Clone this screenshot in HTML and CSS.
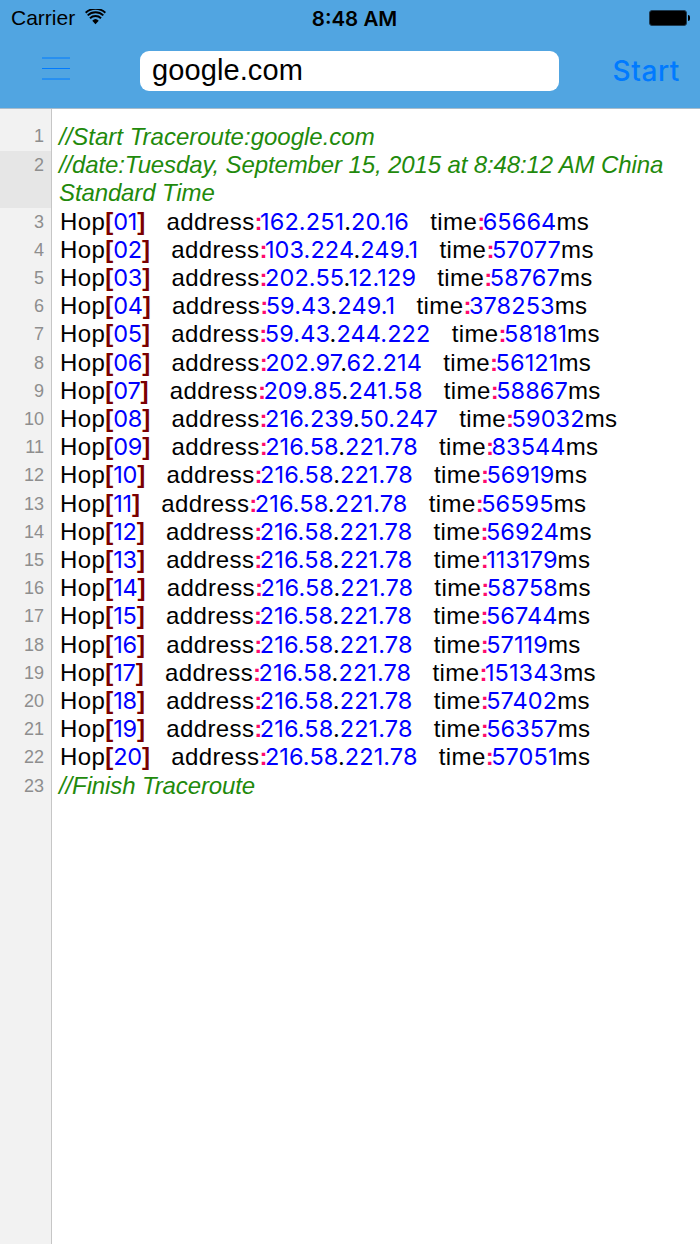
FILE: index.html
```html
<!DOCTYPE html>
<html lang="en">
<head>
<meta charset="utf-8">
<title>Traceroute</title>
<link rel="stylesheet" href="styles.css">
</head>
<body>
<header class="top">
  <div class="status">
    <div class="status-left"><span>Carrier</span>
      <svg class="wifi" width="21" height="16" viewBox="0 0 22 16"><path d="M11 15.500 7.600 11.800a5 5 0 0 1 6.800 0Z" fill="#000"/><path d="M5.200 9.300a8.500 8.500 0 0 1 11.600 0M2.800 6.300a12 12 0 0 1 16.400 0M.7 3.500a15.200 15.200 0 0 1 20.600 0" fill="none" stroke="#000" stroke-width="2"/></svg>
    </div>
    <div class="clock">8:48 AM</div>
    <div class="battery"><span class="battery-body"></span><span class="battery-tip"></span></div>
  </div>
  <div class="nav">
    <svg class="menu" width="28" height="24" viewBox="0 0 28 24"><path d="M0 1h28M0 11.500h28M0 22h28" stroke="#007aff" stroke-width="1"/></svg>
    <div class="field">google.com</div>
    <div class="start">Start</div>
  </div>
</header>
<main class="editor">
  <div class="row first"><div class="num">1</div><div class="code cm">//Start Traceroute:google.com</div></div>
  <div class="row active"><div class="num">2</div><div class="code cm">//date:Tuesday, September 15, 2015 at 8:48:12 AM China Standard Time</div></div>
  <div class="row"><div class="num">3</div><div class="code">Hop<b>[</b><i class="h">01</i><b>]</b>   address<u>:</u><i>162.251<s>.</s>20.16</i>   time<u>:</u><i>65664</i>ms</div></div>
  <div class="row"><div class="num">4</div><div class="code">Hop<b>[</b><i class="h">02</i><b>]</b>   address<u>:</u><i>103.224<s>.</s>249.1</i>   time<u>:</u><i>57077</i>ms</div></div>
  <div class="row"><div class="num">5</div><div class="code">Hop<b>[</b><i class="h">03</i><b>]</b>   address<u>:</u><i>202.55<s>.</s>12.129</i>   time<u>:</u><i>58767</i>ms</div></div>
  <div class="row"><div class="num">6</div><div class="code">Hop<b>[</b><i class="h">04</i><b>]</b>   address<u>:</u><i>59.43<s>.</s>249.1</i>   time<u>:</u><i>378253</i>ms</div></div>
  <div class="row"><div class="num">7</div><div class="code">Hop<b>[</b><i class="h">05</i><b>]</b>   address<u>:</u><i>59.43<s>.</s>244.222</i>   time<u>:</u><i>58181</i>ms</div></div>
  <div class="row"><div class="num">8</div><div class="code">Hop<b>[</b><i class="h">06</i><b>]</b>   address<u>:</u><i>202.97<s>.</s>62.214</i>   time<u>:</u><i>56121</i>ms</div></div>
  <div class="row"><div class="num">9</div><div class="code">Hop<b>[</b><i class="h">07</i><b>]</b>   address<u>:</u><i>209.85<s>.</s>241.58</i>   time<u>:</u><i>58867</i>ms</div></div>
  <div class="row"><div class="num">10</div><div class="code">Hop<b>[</b><i class="h">08</i><b>]</b>   address<u>:</u><i>216.239<s>.</s>50.247</i>   time<u>:</u><i>59032</i>ms</div></div>
  <div class="row"><div class="num">11</div><div class="code">Hop<b>[</b><i class="h">09</i><b>]</b>   address<u>:</u><i>216.58<s>.</s>221.78</i>   time<u>:</u><i>83544</i>ms</div></div>
  <div class="row"><div class="num">12</div><div class="code">Hop<b>[</b><i class="h">10</i><b>]</b>   address<u>:</u><i>216.58<s>.</s>221.78</i>   time<u>:</u><i>56919</i>ms</div></div>
  <div class="row"><div class="num">13</div><div class="code">Hop<b>[</b><i class="h">11</i><b>]</b>   address<u>:</u><i>216.58<s>.</s>221.78</i>   time<u>:</u><i>56595</i>ms</div></div>
  <div class="row"><div class="num">14</div><div class="code">Hop<b>[</b><i class="h">12</i><b>]</b>   address<u>:</u><i>216.58<s>.</s>221.78</i>   time<u>:</u><i>56924</i>ms</div></div>
  <div class="row"><div class="num">15</div><div class="code">Hop<b>[</b><i class="h">13</i><b>]</b>   address<u>:</u><i>216.58<s>.</s>221.78</i>   time<u>:</u><i>113179</i>ms</div></div>
  <div class="row"><div class="num">16</div><div class="code">Hop<b>[</b><i class="h">14</i><b>]</b>   address<u>:</u><i>216.58<s>.</s>221.78</i>   time<u>:</u><i>58758</i>ms</div></div>
  <div class="row"><div class="num">17</div><div class="code">Hop<b>[</b><i class="h">15</i><b>]</b>   address<u>:</u><i>216.58<s>.</s>221.78</i>   time<u>:</u><i>56744</i>ms</div></div>
  <div class="row"><div class="num">18</div><div class="code">Hop<b>[</b><i class="h">16</i><b>]</b>   address<u>:</u><i>216.58<s>.</s>221.78</i>   time<u>:</u><i>57119</i>ms</div></div>
  <div class="row"><div class="num">19</div><div class="code">Hop<b>[</b><i class="h">17</i><b>]</b>   address<u>:</u><i>216.58<s>.</s>221.78</i>   time<u>:</u><i>151343</i>ms</div></div>
  <div class="row"><div class="num">20</div><div class="code">Hop<b>[</b><i class="h">18</i><b>]</b>   address<u>:</u><i>216.58<s>.</s>221.78</i>   time<u>:</u><i>57402</i>ms</div></div>
  <div class="row"><div class="num">21</div><div class="code">Hop<b>[</b><i class="h">19</i><b>]</b>   address<u>:</u><i>216.58<s>.</s>221.78</i>   time<u>:</u><i>56357</i>ms</div></div>
  <div class="row"><div class="num">22</div><div class="code">Hop<b>[</b><i class="h">20</i><b>]</b>   address<u>:</u><i>216.58<s>.</s>221.78</i>   time<u>:</u><i>57051</i>ms</div></div>
  <div class="row"><div class="num">23</div><div class="code cm">//Finish Traceroute</div></div>
  <div class="fill"></div>
</main>
</body>
</html>
```
FILE: styles.css
```css
* { box-sizing: border-box; }
html, body { margin: 0; height: 100%; }
body {
  width: 700px;
  height: 1244px;
  overflow: hidden;
  display: flex;
  flex-direction: column;
  font-family: "Liberation Sans", Arial, sans-serif;
  background: #fff;
}
.top {
  height: 109px;
  background: #51a5e1;
  border-bottom: 1px solid #a9bccb;
  flex: none;
}
.status {
  height: 36px;
  padding: 0 10px 0 11px;
  display: grid;
  grid-template-columns: 1fr auto 1fr;
  align-items: center;
  font-size: 21px;
  color: #000;
}
.status-left { display: flex; align-items: center; gap: 10px; }
.wifi { margin-top: -3px; }
.clock {
  font-family: Inter, "Liberation Sans", sans-serif;
  font-weight: 600;
  font-size: 20.500px;
  margin-left: 8px;
}
.battery { justify-self: end; display: flex; align-items: center; }
.battery-body {
  width: 38px;
  height: 16px;
  background: #000;
  border-radius: 3px;
  border: 1px solid #1d3a50;
}
.battery-tip { width: 2px; height: 6px; background: #000; border-radius: 0 2px 2px 0; margin-left: 1px; }
.nav {
  height: 72px;
  display: flex;
  align-items: center;
  padding: 0 20px 0 42px;
}
.menu { flex: none; margin-bottom: 6px; }
.field {
  width: 419px;
  height: 40px;
  margin: 0 0 2px 70px;
  padding-left: 12px;
  background: #fff;
  border-radius: 9px;
  font-size: 29px;
  line-height: 39px;
  letter-spacing: 0.1px;
  color: #000;
}
.start {
  margin: 0 0 2px auto;
  font-family: Inter, "Liberation Sans", sans-serif;
  font-size: 28px;
  font-weight: 500;
  letter-spacing: 0.6px;
  color: #007aff;
}
.editor {
  flex: 1;
  display: flex;
  flex-direction: column;
  min-height: 0;
}
.row { display: flex; }
.row.first .num { padding-top: 16px; }
.row.first .code { padding-top: 14px; letter-spacing: 0; }
.num {
  flex: none;
  width: 52px;
  padding: 3px 7px 0 0;
  text-align: right;
  font-size: 18px;
  line-height: 22px;
  color: #8e8e8e;
  background: #f2f2f2;
  border-right: 1px solid #c6c6c6;
}
.row.active .num { background: #e6e6e6; }
.code {
  flex: 1;
  padding: 0 20px 0 8px;
  font-size: 24px;
  line-height: 28.200px;
  letter-spacing: 0.4px;
  white-space: pre-wrap;
  color: #000;
}
.code.cm { padding-left: 7px; font-style: italic; letter-spacing: -0.12px; color: #1f8a0c; }
.row.first .code.cm { letter-spacing: 0; }
.code b { font-weight: 700; letter-spacing: 0; color: #7a0000; }
.code i {
  font-family: Inter, "Liberation Sans", sans-serif;
  font-size: 23.500px;
  font-style: normal;
  letter-spacing: 0.1px;
  color: #0000ff;
}
.code i.h { letter-spacing: -0.2px; }
.code s { text-decoration: none; color: #000; }
.code u { font-weight: 700; text-decoration: none; letter-spacing: -2.500px; color: #ff0a6c; }
.fill {
  flex: 1;
  width: 52px;
  background: #f2f2f2;
  border-right: 1px solid #c6c6c6;
}
```
